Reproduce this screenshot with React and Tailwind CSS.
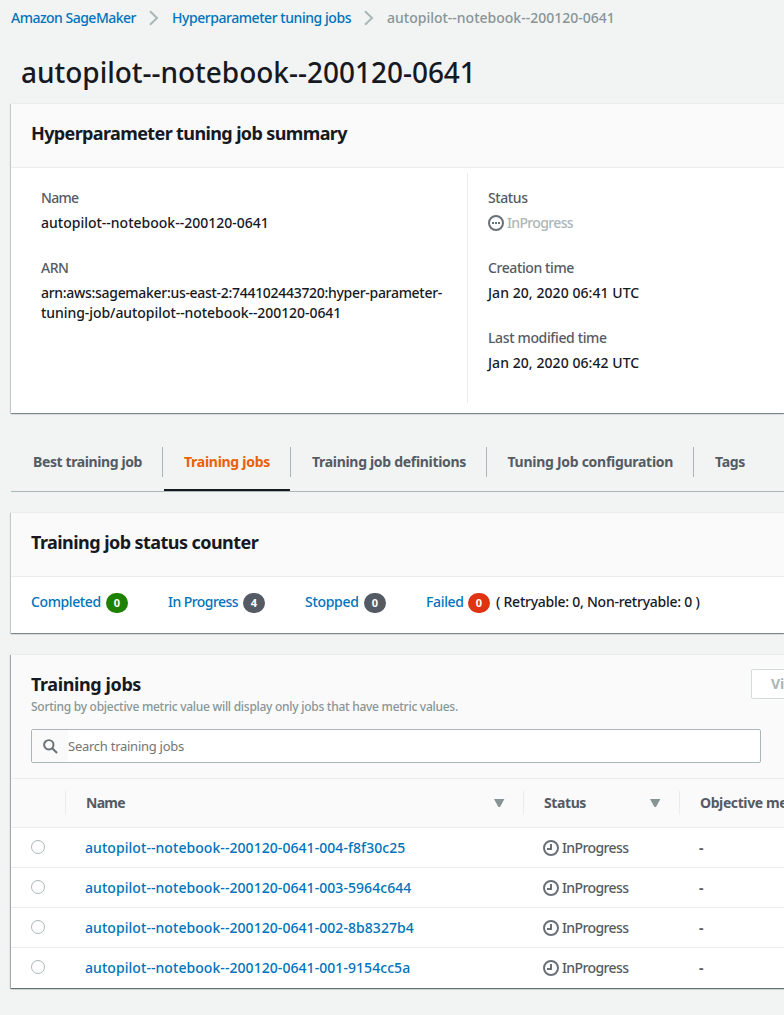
const PANEL =
  'ml-[11px] border-t border-[#eaeded] bg-white'
const SHADOW =
  'shadow-[0_1px_1px_0_rgba(0,28,36,0.3),1px_1px_1px_0_rgba(0,28,36,0.15),-1px_1px_1px_0_rgba(0,28,36,0.15)]'
const DEEP_SHADOW =
  'shadow-[0_1px_0_0_#5f7078,0_1px_1px_0_rgba(0,28,36,0.3),1px_1px_1px_0_rgba(0,28,36,0.3),-1px_1px_1px_0_rgba(0,28,36,0.3)]'

function Chevron({ className }) {
  return (
    <svg className={className} width="10" height="16" viewBox="0 0 10 16" fill="none" stroke="#aab7b8" strokeWidth="2">
      <path d="M1 1.2 8 8l-7 6.8" />
    </svg>
  )
}

function ProgressIcon() {
  return (
    <svg width="16" height="16" viewBox="0 0 16 16" fill="none" className="shrink-0">
      <circle cx="8" cy="8" r="7" stroke="#687078" strokeWidth="2" />
      <path d="M4 7h2v2H4zM7 7h2v2H7zM10 7h2v2h-2z" fill="#687078" />
    </svg>
  )
}

function ClockIcon() {
  return (
    <svg width="16" height="16" viewBox="0 0 16 16" fill="none" stroke="#687078" className="shrink-0">
      <circle cx="8" cy="8" r="7" strokeWidth="2" />
      <path d="M8 4v5H4" strokeWidth="2" />
    </svg>
  )
}

function SortIcon() {
  return (
    <svg width="11" height="8" viewBox="0 0 11 8" fill="#879596" className="shrink-0">
      <path d="M0 0h10.4L6.3 7.4q-1.1 1.2-2.2 0z" />
    </svg>
  )
}

function PanelHeader({ title, className }) {
  return (
    <div className="flex h-16 items-center border-b border-[#eaeded] bg-[#fafafa] px-5">
      <h2 className={`pb-[6px] text-[18px] leading-6 font-bold ${className}`}>{title}</h2>
    </div>
  )
}

function Field({ label, labelClass = '', children }) {
  return (
    <div className="mb-[25px]">
      <div className={`mb-[5px] text-[#545b64] ${labelClass}`}>{label}</div>
      <div>{children}</div>
    </div>
  )
}

const tabs = [
  { label: 'Best training job', box: 'w-[152px] pl-[22px]', spacing: 'tracking-[-0.39px]' },
  { label: 'Training jobs', box: 'w-[128px] pl-[21px]', spacing: 'tracking-[-0.28px]', active: true },
  { label: 'Training job definitions', box: 'w-[196px] pl-[21px]', spacing: 'tracking-[-0.31px]' },
  { label: 'Tuning Job configuration', box: 'w-[207px] pl-[20.5px]', spacing: 'tracking-[-0.28px]' },
  { label: 'Tags', box: 'w-[90px] pl-[21px]', spacing: 'tracking-[-0.3px]', last: true },
]

function Tabs() {
  return (
    <nav className="ml-[11px] flex h-[45px] items-start border-b border-[#aab7b8]">
      {tabs.map((t) => (
        <div
          key={t.label}
          className={`relative h-11 shrink-0 ${t.box}`}
        >
          <div
            className={`flex h-[30px] items-center text-[14px] font-bold ${t.spacing} ${t.last ? '' : 'border-r border-[#aab7b8]'} ${t.active ? 'text-[#eb5f07]' : 'text-[#545b64]'}`}
          >
            {t.label}
          </div>
          {t.active && <div className="absolute right-[1px] bottom-0 left-[1px] h-0.5 bg-[#16191f]" />}
        </div>
      ))}
    </nav>
  )
}

const counters = [
  { label: 'Completed', n: 0, box: 'w-[137px]', text: 'w-[75px] tracking-[-0.4px]', bg: 'bg-[#1d8102]' },
  { label: 'In Progress', n: 4, box: 'w-[137px]', text: 'w-[75px] tracking-[-0.55px]', bg: 'bg-[#545b64]' },
  { label: 'Stopped', n: 0, box: 'w-[121px]', text: 'w-[59px] tracking-[-0.3px]', bg: 'bg-[#545b64]' },
  { label: 'Failed', n: 0, box: 'w-[70px]', text: 'w-[42px] tracking-[-0.35px]', bg: 'bg-[#df3312]' },
]

const jobs = [
  'autopilot--notebook--200120-0641-004-f8f30c25',
  'autopilot--notebook--200120-0641-003-5964c644',
  'autopilot--notebook--200120-0641-002-8b8327b4',
  'autopilot--notebook--200120-0641-001-9154cc5a',
]

export default function App() {
  return (
    <div className="h-[1015px] w-[784px] overflow-hidden bg-[#f2f3f3] font-['Noto_Sans','Open_Sans',sans-serif] text-[14px] leading-5 font-medium whitespace-nowrap text-[#16191f]">
      <div className="flex h-9 items-center pl-[11px] text-[#0073bb]">
        <a className="w-[138px] tracking-[-0.51px]">Amazon SageMaker</a>
        <Chevron className="mr-[13px]" />
        <a className="w-[192px] tracking-[-0.45px]">Hyperparameter tuning jobs</a>
        <Chevron className="mr-[13px]" />
        <span className="text-[#879596]">autopilot--notebook--200120-0641</span>
      </div>

      <h1 className="h-[67px] pt-[18px] pl-[21px] text-[28px] leading-9 font-medium tracking-[-0.02px]">
        autopilot--notebook--200120-0641
      </h1>

      <section className={`${PANEL} ${SHADOW} h-[310px]`}>
        <PanelHeader title="Hyperparameter tuning job summary" className="tracking-[-0.62px]" />
        <div className="flex h-[235px] pt-[5px]">
          <div className="w-[457px] shrink-0 border-r border-[#eaeded] pt-[15px] pl-[30px]">
            <Field label="Name" labelClass="tracking-[-0.7px]">autopilot--notebook--200120-0641</Field>
            <Field label="ARN" labelClass="tracking-[-0.5px]">
              <p className="tracking-[-0.3px]">arn:aws:sagemaker:us-east-2:744102443720:hyper-parameter-</p>
              <p className="tracking-[-0.06px]">tuning-job/autopilot--notebook--200120-0641</p>
            </Field>
          </div>
          <div className="pt-[15px] pl-5">
            <Field label="Status" labelClass="tracking-[-0.4px]">
              <div className="flex items-center gap-[3px] tracking-[-0.65px] text-[#aab7b8]">
                <ProgressIcon />
                InProgress
              </div>
            </Field>
            <Field label="Creation time" labelClass="tracking-[-0.4px]"><span className="tracking-[0.06px]">Jan 20, 2020 06:41 UTC</span></Field>
            <Field label="Last modified time" labelClass="tracking-[-0.36px]"><span className="tracking-[0.06px]">Jan 20, 2020 06:42 UTC</span></Field>
          </div>
        </div>
      </section>

      <div className="pt-[34px] pb-[20px]">
        <Tabs />
      </div>

      <section className={`${PANEL} ${SHADOW} h-[121px]`}>
        <PanelHeader title="Training job status counter" className="tracking-[-0.56px]" />
        <div className="flex h-[52px] items-center pl-5">
          {counters.map((c) => (
            <div key={c.label} className={`flex shrink-0 items-center ${c.box}`}>
              <a className={`shrink-0 pb-0.5 text-[#0073bb] ${c.text}`}>{c.label}</a>
              <span className={`flex h-5 w-[22px] items-center justify-center rounded-[10px] text-[11px] font-bold text-white ${c.bg}`}>
                {c.n}
              </span>
            </div>
          ))}
          <span className="pb-0.5 tracking-[-0.25px]">( Retryable: 0, Non-retryable: 0 )</span>
        </div>
      </section>

      <section className={`${PANEL} ${DEEP_SHADOW} mt-[21px] h-[334px]`}>
        <div className="h-[124px] border-b border-[#eaeded] bg-[#fafafa] px-5 pt-[14px]">
          <div className="flex h-[60px] justify-between">
            <div>
              <h2 className="pt-[3px] text-[18px] leading-6 font-bold tracking-[-0.4px]">Training jobs</h2>
              <p className="pt-[2px] text-[12px] leading-[18px] tracking-[-0.27px] text-[#879596]">
                Sorting by objective metric value will display only jobs that have metric values.
              </p>
            </div>
            <button className="-mr-[80px] h-[30px] w-[93px] shrink-0 rounded-[2px] border border-[#d5dbdb] bg-white pl-[19px] text-left font-bold text-[#aab7b8]">
              View
            </button>
          </div>
          <div className="flex h-[34px] w-[730px] items-center rounded-[2px] border border-[#aab7b8] bg-white">
            <div className="flex h-8 w-9 shrink-0 items-center bg-[#fafafa] pl-[11px]">
              <svg width="15" height="15" viewBox="0 0 16 16" fill="none" stroke="#687078" strokeWidth="2.1">
                <circle cx="6.2" cy="6.2" r="5" />
                <path d="m9.8 9.8 5.2 5.2" />
              </svg>
            </div>
            <span className="text-[13px] font-normal tracking-[-0.26px] text-[#757575]">Search training jobs</span>
          </div>
        </div>

        <div className="flex h-[49px] items-center border-b border-[#eaeded] bg-[#fafafa] font-bold tracking-[-0.4px] text-[#545b64]">
          <div className="h-6 w-[55px] shrink-0 border-r border-[#eaeded]" />
          <div className="flex h-6 w-[458px] shrink-0 items-center justify-between border-r border-[#eaeded] pr-[18px] pl-5">
            <span className="tracking-[-0.75px]">Name</span>
            <SortIcon />
          </div>
          <div className="flex h-6 w-[156px] shrink-0 items-center justify-between border-r border-[#eaeded] pr-[18px] pl-5">
            Status
            <SortIcon />
          </div>
          <div className="pl-5">Objective metric</div>
        </div>

        {jobs.map((job, i) => (
          <div
            key={job}
            className={`flex h-10 items-center text-[#545b64] ${i < jobs.length - 1 ? 'border-b border-[#eaeded]' : ''}`}
          >
            <div className="w-[74px] shrink-0 pb-0.5 pl-5">
              <span className="block size-[14px] rounded-full border border-[#aab7b8] bg-white" />
            </div>
            <a className="w-[458px] shrink-0 tracking-[0.06px] text-[#0073bb]">{job}</a>
            <div className="flex w-[156px] shrink-0 items-center gap-[3px] tracking-[-0.6px]">
              <ClockIcon />
              InProgress
            </div>
            <span className="font-bold">-</span>
          </div>
        ))}
      </section>
    </div>
  )
}
